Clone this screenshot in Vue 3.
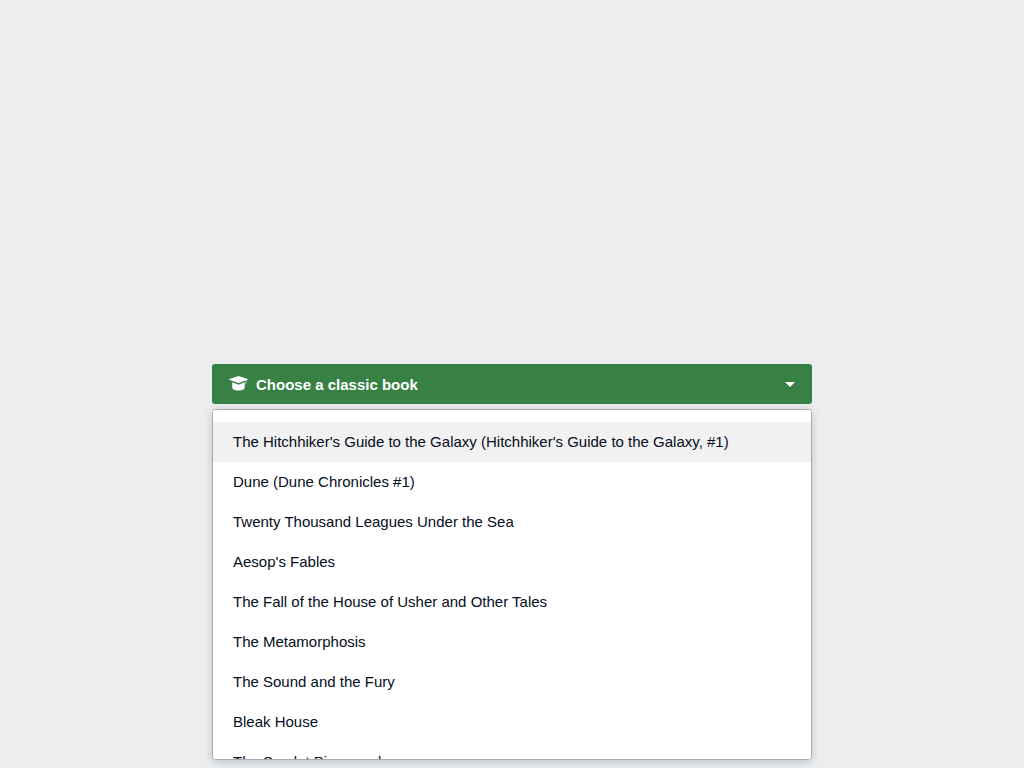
<script setup>
import { ref } from 'vue'
const books = [
  "The Hitchhiker's Guide to the Galaxy (Hitchhiker's Guide to the Galaxy, #1)",
  'Dune (Dune Chronicles #1)',
  'Twenty Thousand Leagues Under the Sea',
  "Aesop's Fables",
  'The Fall of the House of Usher and Other Tales',
  'The Metamorphosis',
  'The Sound and the Fury',
  'Bleak House',
  'The Scarlet Pimpernel',
]
const active = ref(0)
</script>

<template>
  <main class="page">
    <div class="dropdown">
      <button class="toggle" type="button" aria-haspopup="listbox" aria-expanded="true" aria-controls="book-list">
        <svg class="cap" viewBox="0 0 19 16" aria-hidden="true">
          <path d="M8.6 .3Q9.5 0 10.4 .3L18.6 3Q19.3 3.4 18.6 3.8L10.4 6.8Q9.5 7.1 8.6 6.8L.4 3.8Q-.3 3.4 .4 3Z" />
          <path d="M3.2 6.2 8.2 8.3Q9.5 8.8 10.8 8.3L15.7 6.2V11.2C15.7 13.2 13.4 14.5 9.5 14.5S3.2 13.2 3.2 11.2Z" />
          <path class="tassel" d="M17.2 3.8V5.6Q17.2 7 16.5 8.2" />
        </svg>
        <span class="label">Choose a classic book</span>
        <svg class="caret" viewBox="0 0 10 5" aria-hidden="true"><path d="M0 0H10L5 5Z" /></svg>
      </button>
      <ul id="book-list" class="menu" role="listbox" aria-label="Classic books">
        <li
          v-for="(book, i) in books"
          :key="book"
          class="option"
          :class="{ active: i === active }"
          role="option"
          :aria-selected="i === active"
          @mouseenter="active = i"
        >{{ book }}</li>
      </ul>
    </div>
  </main>
</template>

<style>
body {
  background: #ebedef;
}
</style>

<style scoped>
.page {
  box-sizing: border-box;
  display: flex;
  justify-content: center;
  align-items: center;
  height: 100vh;
  font-family: "Liberation Sans", Arial, sans-serif;
  font-size: 15px;
  color: #050d22;
}
.dropdown {
  position: relative;
  width: 600px;
  max-width: 100%;
}
.toggle {
  display: flex;
  align-items: center;
  box-sizing: border-box;
  width: 100%;
  height: 40px;
  padding: 0 17px;
  border: 0;
  border-radius: 3px;
  background: #388144;
  color: #fff;
  font: inherit;
  font-weight: 700;
}
.cap {
  width: 19px;
  height: 16px;
  margin-right: 8px;
  fill: currentColor;
}
.tassel {
  fill: none;
  stroke: currentColor;
  stroke-width: 1;
  opacity: 0.6;
}
.label {
  flex: 1;
  text-align: left;
}
.caret {
  width: 10px;
  height: 5px;
  fill: currentColor;
}
.menu {
  position: absolute;
  top: 100%;
  left: 0;
  box-sizing: border-box;
  width: 100%;
  max-height: 351px;
  margin: 5px 0 0;
  padding: 12px 0;
  overflow-y: auto;
  scrollbar-width: none;
  list-style: none;
  background: #fff;
  border: 1px solid #a6abb2;
  border-radius: 4px;
  box-shadow: 0 2px 8px rgba(0, 22, 40, 0.2);
}
.option {
  padding: 0 20px;
  line-height: 40px;
  white-space: nowrap;
}
.option.active {
  background: #f1f1f1;
}
</style>
